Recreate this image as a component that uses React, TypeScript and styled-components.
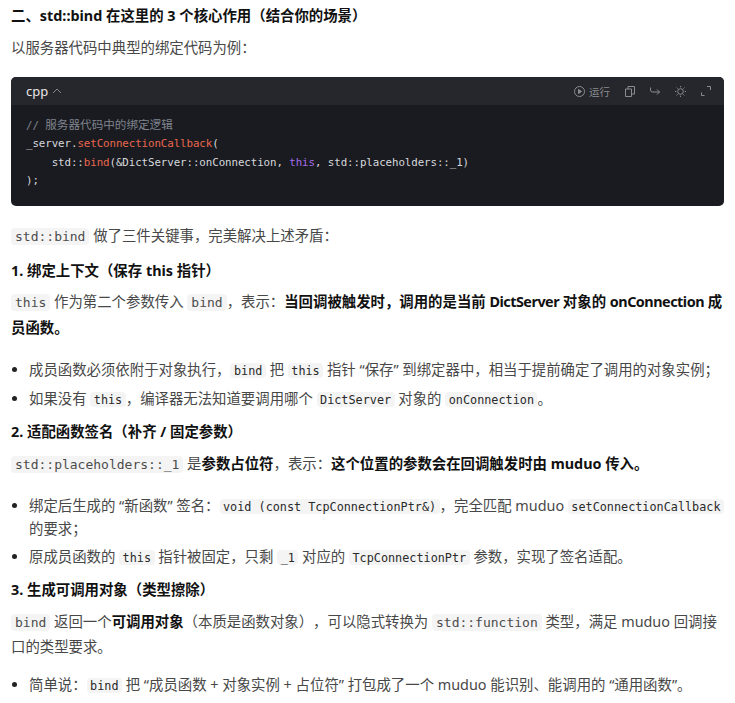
import React from "react";
import styled, { createGlobalStyle } from "styled-components";

const GlobalStyle = createGlobalStyle`
  html, body {
    margin: 0;
    padding: 0;
    background: #fff;
  }
  body {
    font-family: "Noto Sans", "Noto Sans CJK SC", sans-serif;
    font-size: 14.4px;
    color: #484848;
    text-spacing-trim: space-all;
  }
`;

const Page = styled.div`
  width: 735px;
  height: 703px;
  overflow: hidden;
  box-sizing: border-box;
  padding: 6px 11px 0 11px;
`;

const Heading = styled.div<{ $mt: number }>`
  margin-top: ${p => p.$mt}px;
  line-height: 20px;
  font-weight: 700;
  color: #111;
`;

const Para = styled.div<{ $mt: number }>`
  margin-top: ${p => p.$mt}px;
  line-height: 25.5px;
`;

const Code = styled.code<{ $small?: boolean }>`
  font-family: "DejaVu Sans Mono", monospace;
  font-size: ${p => (p.$small ? 11.8 : 13)}px;
  line-height: 1;
  color: ${p => (p.$small ? "#2a2a2a" : "#4c4c4c")};
  background: #f4f4f4;
  border-radius: 4px;
  padding: ${p => (p.$small ? "0.5px 3.5px" : "1px 4px")};
`;

const Strong = styled.strong`
  font-weight: 700;
  color: #111;
`;

/* bold latin words run narrower than Noto Sans in the reference */
const Tight = styled.span`
  letter-spacing: -0.5px;
`;

const List = styled.ul<{ $mt: number }>`
  list-style: none;
  margin: ${p => p.$mt}px 0 0 0;
  padding: 0;
`;

const Item = styled.li<{ $gap?: number }>`
  position: relative;
  padding-left: 18px;
  margin-top: ${p => p.$gap || 0}px;
  line-height: 23px;
  &::before {
    content: "";
    position: absolute;
    left: 0.5px;
    top: 9px;
    width: 5px;
    height: 5px;
    border-radius: 50%;
    background: #222;
  }
`;

const CodeCard = styled.div`
  margin-top: 16.5px;
  border-radius: 5px;
  overflow: hidden;
  background: #1a1b20;
`;

const CodeHeader = styled.div`
  height: 28px;
  background: #26272c;
  display: flex;
  align-items: center;
  justify-content: space-between;
  padding: 0 13px 0 15px;
`;

const Lang = styled.div`
  display: flex;
  align-items: center;
  gap: 4px;
  font-size: 13px;
  color: #e6e6e6;
`;

const Chevron = styled.svg`
  display: block;
  fill: none;
  stroke: #85868a;
  stroke-width: 1;
`;

const Tools = styled.div`
  display: flex;
  align-items: center;
  gap: 15px;
  color: #8b8c90;
`;

const RunButton = styled.div`
  display: flex;
  align-items: center;
  gap: 4px;
  font-size: 10.5px;
`;

const CodeBody = styled.pre`
  margin: 0;
  padding: 11.5px 15px 0 15px;
  font-family: "DejaVu Sans Mono", monospace;
  font-size: 10.8px;
  letter-spacing: -0.08px;
  line-height: 18.6px;
  color: #d6d8dc;
  height: 101px;
  box-sizing: border-box;
`;

const Comment = styled.span`
  color: #7f848e;
`;

const CommentCjk = styled.span`
  font-family: "Noto Sans CJK SC", sans-serif;
  font-size: 11.6px;
  letter-spacing: 0;
  line-height: 1;
`;

const Tok = styled.span<{ $c: string }>`
  color: ${p => p.$c};
`;

const Glyph = styled.svg`
  display: block;
  fill: none;
  stroke: currentColor;
  stroke-width: 1;
`;

export default function App() {
  return (
    <Page>
      <GlobalStyle />
      <Heading $mt={0}>二、std::bind 在这里的 3 个核心作用（结合你的场景）</Heading>
      <Para $mt={9}>以服务器代码中典型的绑定代码为例：</Para>
      <CodeCard>
        <CodeHeader>
          <Lang>
            cpp
            <Chevron width="10" height="10" viewBox="0 0 10 10">
              <path d="M1 7l4-4 4 4" />
            </Chevron>
          </Lang>
          <Tools>
            <RunButton>
              <Glyph width="11" height="11" viewBox="0 0 11 11">
                <circle cx="5.500" cy="5.500" r="5" />
                <path d="M4.500 3.500l3 2-3 2z" fill="currentColor" />
              </Glyph>
              运行
            </RunButton>
            <Glyph width="10" height="11" viewBox="0 0 10 11">
              <path d="M0.500 3h6v7.500h-6zM3 3v-2.500h6.500v7.500h-3" />
            </Glyph>
            <Glyph width="10" height="9" viewBox="0 0 10 9">
              <path d="M0.500 0.500v2.500q0 2 2 2h7M7 2.500l2.500 2.500-2.500 2.500" />
            </Glyph>
            <Glyph width="11" height="11" viewBox="0 0 11 11">
              <circle cx="5.500" cy="5.500" r="2.800" />
              <path d="M5.500 0v1.300M5.500 9.700v1.300M0 5.500h1.300M9.700 5.500h1.300M1.600 1.600l1 1M8.400 8.400l1 1M1.600 9.400l1-1M8.400 2.600l1-1" />
            </Glyph>
            <Glyph width="10" height="10" viewBox="0 0 10 10">
              <path d="M6 0.500h3.500v3.500M0.500 6.500v3h3" />
            </Glyph>
          </Tools>
        </CodeHeader>
        <CodeBody>
          <Comment>
            {"// "}
            <CommentCjk>服务器代码中的绑定逻辑</CommentCjk>
          </Comment>
          {"\n_server."}
          <Tok $c="#e9674f">setConnectionCallback</Tok>
          {"(\n    std::"}
          <Tok $c="#e9674f">bind</Tok>
          {"(&DictServer::onConnection, "}
          <Tok $c="#a56be8">this</Tok>
          {", std::placeholders::_1)\n);"}
        </CodeBody>
      </CodeCard>
      <Para $mt={17}>
        <Code>std::bind</Code> 做了三件关键事，完美解决上述矛盾：
      </Para>
      <Heading $mt={12.5}>1. 绑定上下文（保存 this 指针）</Heading>
      <Para $mt={8}>
        <Code>this</Code> 作为第二个参数传入 <Code>bind</Code>，表示：
        <Strong>
          当回调被触发时，调用的是当前 <Tight>DictServer</Tight> 对象的 <Tight>onConnection</Tight> 成员函数。
        </Strong>
      </Para>
      <List $mt={17.5}>
        <Item>
          成员函数必须依附于对象执行，<Code $small>bind</Code> 把 <Code $small>this</Code> 指针 “保存” 到绑定器中，相当于提前确定了调用的对象实例；
        </Item>
        <Item $gap={6}>
          如果没有 <Code $small>this</Code>，编译器无法知道要调用哪个 <Code $small>DictServer</Code> 对象的 <Code $small>onConnection</Code>。
        </Item>
      </List>
      <Heading $mt={12.5}>2. 适配函数签名（补齐 / 固定参数）</Heading>
      <Para $mt={8.5}>
        <Code>std::placeholders::_1</Code> 是<Strong>参数占位符</Strong>，表示：
        <Strong>这个位置的参数会在回调触发时由 muduo 传入。</Strong>
      </Para>
      <List $mt={17.5}>
        <Item>
          绑定后生成的 “新函数” 签名：<Code $small>void (const TcpConnectionPtr&amp;)</Code>，完全匹配 muduo <Code $small>setConnectionCallback</Code> 的要求；
        </Item>
        <Item $gap={5}>
          原成员函数的 <Code $small>this</Code> 指针被固定，只剩 <Code $small>_1</Code> 对应的 <Code $small>TcpConnectionPtr</Code> 参数，实现了签名适配。
        </Item>
      </List>
      <Heading $mt={12.5}>3. 生成可调用对象（类型擦除）</Heading>
      <Para $mt={8.5}>
        <Code>bind</Code> 返回一个<Strong>可调用对象</Strong>（本质是函数对象），可以隐式转换为 <Code>std::function</Code> 类型，满足 muduo 回调接口的类型要求。
      </Para>
      <List $mt={13}>
        <Item>
          简单说：<Code $small>bind</Code> 把 “成员函数 + 对象实例 + 占位符” 打包成了一个 muduo 能识别、能调用的 “通用函数”。
        </Item>
      </List>
    </Page>
  );
}
